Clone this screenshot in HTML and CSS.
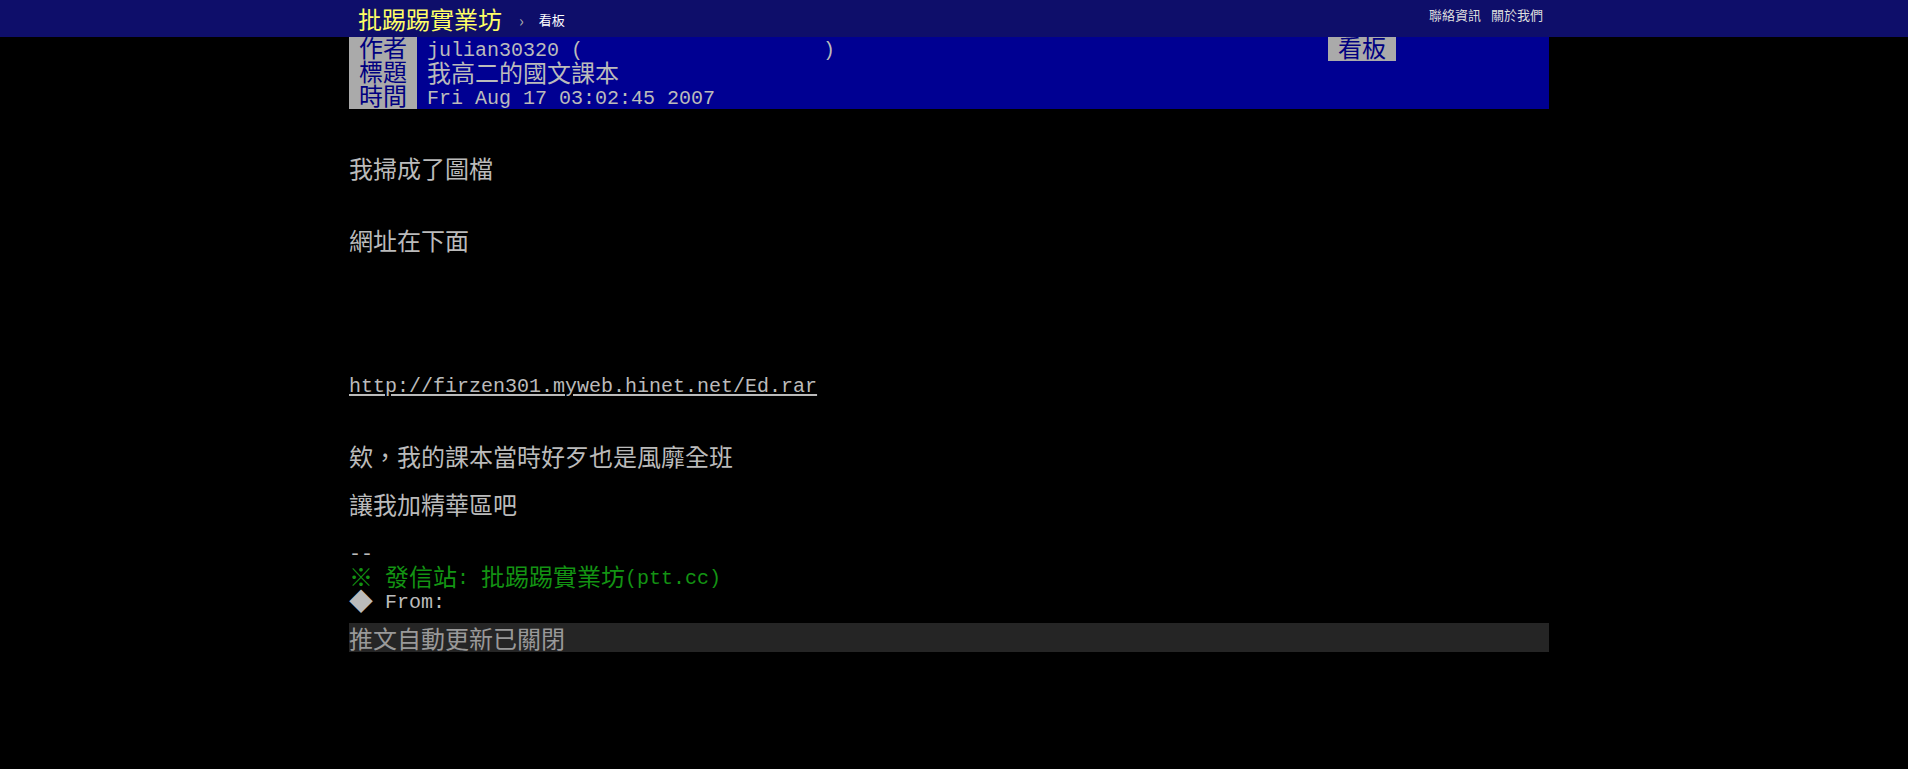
FILE: index.html
```html
<!DOCTYPE html>
<html lang="zh-Hant">
<head>
<meta charset="utf-8">
<title>[轉錄] 我高二的國文課本 - 批踢踢實業坊</title>
<link rel="stylesheet" href="styles.css">
</head>
<body>
<div class="topbar">
  <div class="wrap topbar-inner">
    <a class="logo" href="#">批踢踢實業坊</a>
    <span class="sep">›</span>
    <a class="board" href="#">看板</a>
    <div class="right">
      <a href="#">聯絡資訊</a>
      <a href="#">關於我們</a>
    </div>
  </div>
</div>

<div class="wrap main">
  <div class="meta">
    <div class="metaline">
      <span class="tag">作者</span><span class="val"><span class="a">julian30320 (                    )</span></span>
      <span class="meta-right"><span class="tag">看板</span></span>
    </div>
    <div class="metaline">
      <span class="tag">標題</span><span class="val">我高二的國文課本</span>
    </div>
    <div class="metaline">
      <span class="tag">時間</span><span class="val"><span class="a">Fri Aug 17 03:02:45 2007</span></span>
    </div>
  </div>

  <div class="content">
    <div class="ln"></div>
    <div class="ln"></div>
    <div class="ln">我掃成了圖檔</div>
    <div class="ln"></div>
    <div class="ln"></div>
    <div class="ln">網址在下面</div>
    <div class="ln"></div>
    <div class="ln"></div>
    <div class="ln"></div>
    <div class="ln"></div>
    <div class="ln"></div>
    <div class="ln"><a class="a link" href="#">http://firzen301.myweb.hinet.net/Ed.rar</a></div>
    <div class="ln"></div>
    <div class="ln"></div>
    <div class="ln">欸，我的課本當時好歹也是風靡全班</div>
    <div class="ln"></div>
    <div class="ln">讓我加精華區吧</div>
    <div class="ln"></div>
    <div class="ln"><span class="a">--</span></div>
    <div class="ln f2">※<span class="a"> </span>發信站<span class="a">: </span>批踢踢實業坊<span class="a">(ptt.cc)</span></div>
    <div class="ln">◆<span class="a"> From:</span></div>
  </div>

  <div class="polling">推文自動更新已關閉</div>
</div>
</body>
</html>
```

FILE: styles.css
```css
html, body {
  margin: 0;
  padding: 0;
  background: #000;
}

body {
  font-family: "Noto Sans CJK TC", "Noto Sans", sans-serif;
  color: #bbb;
}

a {
  text-decoration: none;
  color: inherit;
}

.wrap {
  width: 1200px;
  margin: 0 auto;
  padding-right: 10px;
}

/* top bar */
.topbar {
  background: #0e0e6a;
  height: 37px;
}

.topbar-inner {
  display: flex;
  align-items: center;
  height: 37px;
}

.logo {
  color: #ffff66;
  font-size: 24px;
  line-height: 30px;
  padding-left: 9px;
}

.sep {
  color: #aaa;
  font-size: 16px;
  margin: 2px 15px 0 17px;
}

.board {
  color: #fff;
  font-size: 13px;
  margin-top: 2px;
}

.right {
  margin-left: auto;
  display: flex;
  gap: 10px;
  padding-right: 6px;
  margin-top: -8px;
}

.right a {
  color: #ddd;
  font-size: 13px;
}

/* article header + body share the terminal font */
.meta,
.content {
  font-family: "Noto Sans Mono CJK TC", "Noto Sans CJK TC", monospace;
  font-size: 24px;
}

.meta {
  background: #000092;
}

.metaline {
  display: flex;
  height: 24px;
  line-height: 22px;
  white-space: pre;
}

.tag {
  display: block;
  height: 24px;
  line-height: 20px;
  background: #aaa;
  color: #000080;
  padding: 0 10px;
}

.val {
  color: #bbb;
  padding-left: 10px;
}

.meta-right {
  display: flex;
  margin-left: auto;
  margin-right: 153px;
}

.ln {
  height: 24px;
  line-height: 22px;
  white-space: pre;
}

/* half-width latin runs: 12px cells, smaller glyphs, as in the BBS font */
.a {
  font-family: "Liberation Mono", "DejaVu Sans Mono", monospace;
  font-size: 20px;
  line-height: 14px;
  vertical-align: 2.5px;
}

.link {
  color: #bbb;
  text-decoration: underline;
  text-decoration-thickness: 2px;
  text-underline-offset: 2px;
}

.f2 {
  color: #139313;
}

.polling {
  margin-top: 10px;
  background: #252525;
  color: #999;
  font-size: 24px;
  line-height: 29px;
  height: 29px;
}
```
